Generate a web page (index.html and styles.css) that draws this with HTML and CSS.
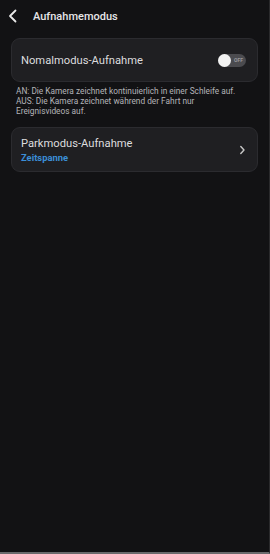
FILE: index.html
```html
<!DOCTYPE html>
<html lang="de">

<head>
    <meta charset="UTF-8">
    <meta name="viewport" content="width=device-width, initial-scale=1.0">
    <title>Aufnahmemodus</title>
    <link rel="stylesheet" href="styles.css">
</head>

<body>
    <div class="screen">
        <!-- Kopfzeile -->
        <div class="header">
            <svg class="back" width="10" height="14" viewBox="0 0 10 14">
                <path d="M7.5 1.5 L2 7 L7.5 12.5" fill="none" stroke="#e8e8e8" stroke-width="1.8" stroke-linecap="round" stroke-linejoin="round"/>
            </svg>
            <div class="title">Aufnahmemodus</div>
        </div>

        <!-- Normalmodus -->
        <div class="card row">
            <div class="label">Nomalmodus-Aufnahme</div>
            <div class="toggle">
                <span class="knob"></span>
                <span class="toggle-text">OFF</span>
            </div>
        </div>
        <div class="hint">AN: Die Kamera zeichnet kontinuierlich in einer Schleife auf.<br>AUS: Die Kamera zeichnet während der Fahrt nur Ereignisvideos auf.</div>

        <!-- Parkmodus -->
        <div class="card row park">
            <div class="texts">
                <div class="label">Parkmodus-Aufnahme</div>
                <div class="sub">Zeitspanne</div>
            </div>
            <svg class="chevron" width="7" height="10" viewBox="0 0 7 10">
                <path d="M1.8 1.5 L5 5 L1.8 8.5" fill="none" stroke="#c8c8c8" stroke-width="1.4" stroke-linecap="round" stroke-linejoin="round"/>
            </svg>
        </div>
    </div>
</body>

</html>
```

FILE: styles.css
```css
html, body {
    margin: 0;
    height: 100%;
    background: #121214;
}

body {
    font-family: Roboto, 'Noto Sans', sans-serif;
    color: #e4e4e6;
}

.screen {
    height: 100%;
    box-sizing: border-box;
    border-right: 1px solid #2a2a2c;
    border-bottom: 2px solid #6a6a6c;
}

/* Kopfzeile */
.header {
    display: flex;
    align-items: center;
    height: 32px;
    padding: 0 0 0 8px;
}

.back {
    margin-right: 15px;
}

.title {
    font-size: 11px;
    font-weight: 500;
    color: #e6e6e8;
}

/* Karten */
.card {
    margin: 6px 11px 0 11px;
    background: #1f1f22;
    border: 1px solid #2b2b2f;
    border-radius: 9px;
}

.row {
    display: flex;
    align-items: center;
    justify-content: space-between;
    height: 42px;
    padding: 0 10px 0 9px;
}

.label {
    font-size: 11.2px;
    color: #dcdcde;
}

.toggle {
    position: relative;
    width: 28px;
    height: 13px;
    border-radius: 7px;
    background: #4b4b4f;
    margin-right: 1px;
}

.knob {
    position: absolute;
    left: 0;
    top: 0;
    width: 13px;
    height: 13px;
    border-radius: 50%;
    background: #f2f2f2;
}

.toggle-text {
    position: absolute;
    right: 3px;
    top: 3px;
    font-size: 5px;
    font-weight: 700;
    color: #9a9a9e;
}

.hint {
    padding: 5px 24px 0 16px;
    font-size: 8.3px;
    line-height: 9.8px;
    color: #b4b4b8;
}

.park {
    margin-top: 11px;
    height: 43px;
}

.texts {
    display: flex;
    flex-direction: column;
    gap: 2px;
}

.sub {
    font-size: 9.4px;
    font-weight: 700;
    color: #3b8ed6;
}

.chevron {
    margin-right: 1px;
}
```
